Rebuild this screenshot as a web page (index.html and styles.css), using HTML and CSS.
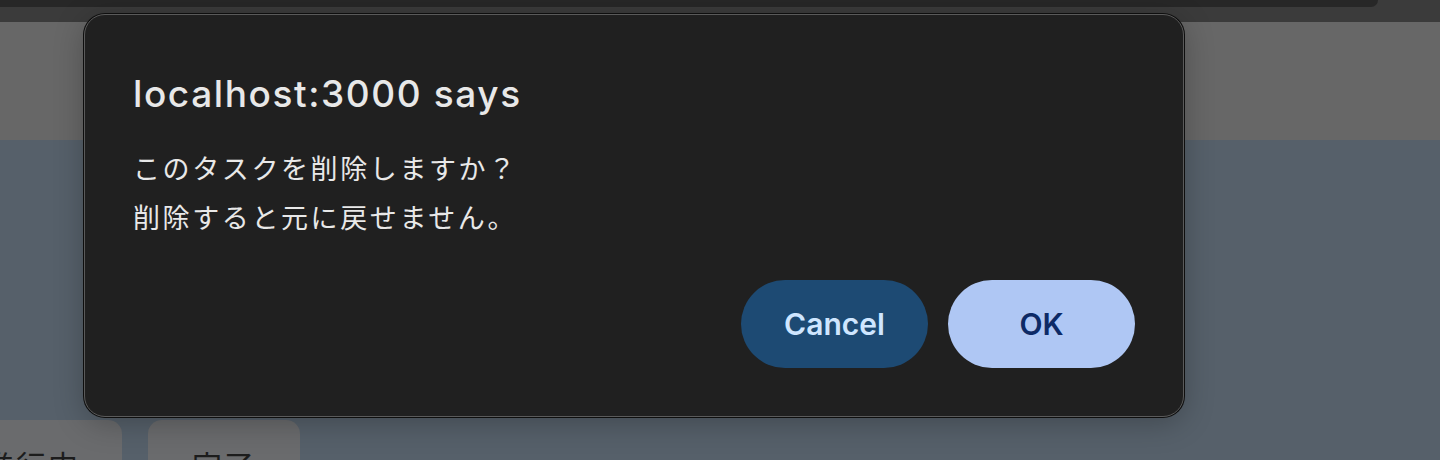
FILE: index.html
```html
<!DOCTYPE html>
<html lang="ja">
<head>
<meta charset="utf-8">
<title>Confirm</title>
<link rel="stylesheet" href="styles.css">
</head>
<body>
<div class="page">
  <div class="chrome">
    <div class="chrome-top"></div>
  </div>
  <div class="header"></div>
  <div class="content">
    <div class="tabs">
      <div class="tab tab-first">進行中</div>
      <div class="tab">完了</div>
    </div>
  </div>
</div>
<div class="dialog" role="dialog">
  <div class="title">localhost:3000 says</div>
  <div class="message">
    <p>このタスクを削除しますか？</p>
    <p>削除すると元に戻せません。</p>
  </div>
  <div class="actions">
    <button class="btn btn-cancel">Cancel</button>
    <button class="btn btn-ok">OK</button>
  </div>
</div>
</body>
</html>
```
FILE: styles.css
```css
* { box-sizing: border-box; }
html, body {
  margin: 0;
  padding: 0;
  width: 1440px;
  height: 460px;
  overflow: hidden;
  background: #565f68;
  font-family: Inter, "Noto Sans", "Noto Sans CJK JP", sans-serif;
}
.page {
  display: flex;
  flex-direction: column;
  height: 460px;
}
.chrome {
  height: 22px;
  background: #3b3b3b;
}
.chrome-top {
  height: 7px;
  width: 1378px;
  background: #272727;
  border-bottom-right-radius: 8px;
}
.header {
  height: 118px;
  background: #676767;
}
.content {
  flex: 1;
  background: #56606a;
  display: flex;
  align-items: flex-end;
  overflow: hidden;
}
.tabs {
  display: flex;
  gap: 26px;
  margin-left: -58px;
  margin-bottom: -40px;
}
.tab {
  height: 80px;
  width: 152px;
  border-radius: 14px;
  background: #6a6b6d;
  color: #1c1c1c;
  font-family: "Noto Sans CJK JP", sans-serif;
  font-size: 30px;
  line-height: 40px;
  padding-top: 24px;
  text-align: center;
  letter-spacing: 2px;
}
.tab-first {
  width: 180px;
}
.dialog {
  position: absolute;
  left: 84px;
  top: 14px;
  width: 1100px;
  height: 403px;
  background: #202020;
  border: 1.5px solid #5a5a5a;
  border-radius: 21px;
  box-shadow: 0 0 0 1px #0e0e0e, 0 6px 30px rgba(0,0,0,0.25);
  padding: 59px 48px 48px 48px;
  display: flex;
  flex-direction: column;
}
.title {
  font-family: Inter, "Noto Sans", sans-serif;
  font-weight: 500;
  font-size: 37px;
  line-height: 40px;
  color: #e8e8e8;
  letter-spacing: 1.6px;
}
.message {
  margin-top: 29px;
  font-family: "Noto Sans CJK JP", sans-serif;
  font-size: 27px;
  line-height: 49px;
  color: #e8e8e8;
  letter-spacing: 2.6px;
}
.message p { margin: 0; }
.actions {
  margin-top: auto;
  display: flex;
  justify-content: flex-end;
  gap: 20px;
}
.btn {
  width: 187px;
  height: 88px;
  border: none;
  border-radius: 44px;
  font-family: Inter, "Noto Sans", sans-serif;
  font-weight: 600;
  font-size: 30px;
  padding: 0;
}
.btn-cancel {
  background: #1d4a73;
  color: #cfe6ff;
}
.btn-ok {
  background: #afc7f4;
  color: #0d2a66;
}
```
